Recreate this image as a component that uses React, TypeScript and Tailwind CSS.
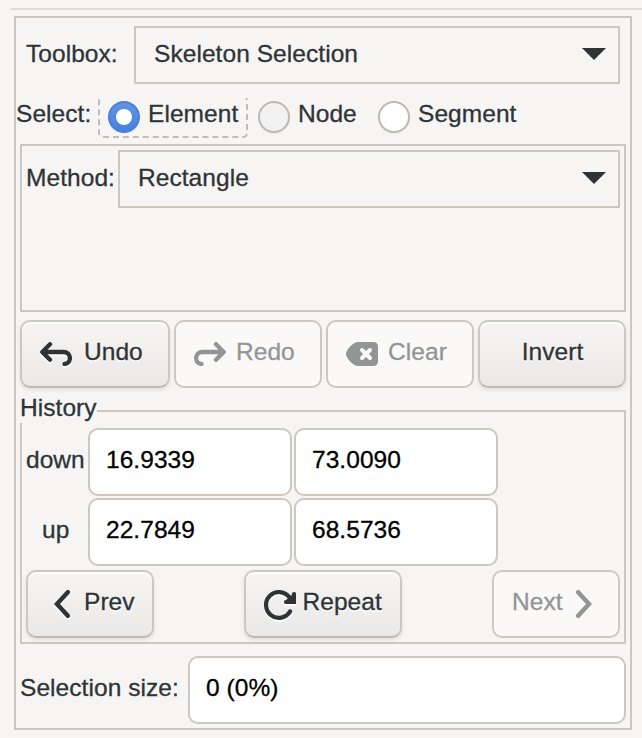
import type { ReactNode } from "react";

function Combo({ value, className }: { value: string; className: string }) {
  return (
    <div className={`flex h-[58px] items-center justify-between border-2 border-[#cdc7c2] pl-[18px] pr-3 ${className}`}>
      <span className="pb-[3px]">{value}</span>
      <svg width="24" height="12" viewBox="0 0 24 12" className="mb-[2px]">
        <path d="M0 0H24L12 12Z" fill="#2e3436" />
      </svg>
    </div>
  );
}

function Button({ disabled, className, children }: { disabled?: boolean; className: string; children: ReactNode }) {
  const look = disabled
    ? "border-[#cdc7c2] bg-[#faf9f8] text-[#929595]"
    : "border-[#cdc7c2] border-b-[#bfb8b1] bg-linear-to-b from-[#f6f5f4] to-[#e9e8e7] text-[#2e3436] shadow-[inset_0_2px_#ffffff,0_2px_4px_rgba(0,0,0,0.09)] [text-shadow:0_2px_rgba(255,255,255,0.77)] [&_svg]:drop-shadow-[0_2px_0_rgba(255,255,255,0.77)]";
  return (
    <button className={`flex h-[68px] shrink-0 items-center rounded-[10px] border-2 ${look} ${className}`}>
      {children}
    </button>
  );
}

function Entry({ value, className }: { value: string; className: string }) {
  return (
    <div className={`flex h-[68px] items-center rounded-[10px] border-2 border-[#cdc7c2] bg-white pb-[4px] pl-4 text-black ${className}`}>
      {value}
    </div>
  );
}

function Radio({ state }: { state: "on" | "off" | "dim" }) {
  if (state === "on")
    return (
      <span className="flex size-8 items-center justify-center rounded-full border-2 border-[#4a80d8] bg-linear-to-b from-[#6193e3] to-[#4681df]">
        <span className="size-4 rounded-full bg-white" />
      </span>
    );
  return (
    <span
      className={`size-8 rounded-full border-2 border-[#bfb8b1] shadow-[0_1px_1px_rgba(0,0,0,0.06)] ${state === "dim" ? "bg-[#f1f1f1]" : "bg-white"}`}
    />
  );
}

function TurnArrow({ flip }: { flip?: boolean }) {
  return (
    <svg width="32" height="24" viewBox="0 0 32 24" fill="none" stroke="currentColor" strokeWidth="4.300" strokeLinecap="round" strokeLinejoin="round" className={flip ? "-scale-x-100" : ""}>
      <path d="M10 2.200L2.300 10L10 17.800M3 10H23.500C27.500 10 29.900 12.500 29.900 16C29.900 19.500 27.500 21.900 24.500 21.900" />
    </svg>
  );
}

function Chevron({ flip }: { flip?: boolean }) {
  return (
    <svg width="16" height="28" viewBox="0 0 16 28" fill="none" stroke="currentColor" strokeWidth="4.400" strokeLinecap="round" strokeLinejoin="miter" className={flip ? "-scale-x-100" : ""}>
      <path d="M13.800 2.200L3 14L13.800 25.800" />
    </svg>
  );
}

export default function App() {
  return (
    <div className="h-[738px] w-[642px] bg-[#f6f5f4] pt-2 pl-[10px] font-['Liberation_Sans',Arial,sans-serif] text-[24.5px] leading-[24px] tracking-[0.06px] whitespace-nowrap text-[#2e3436] [-webkit-text-stroke:0.3px_currentColor]">
      <div className="h-[2px] bg-[#dedddb]" />
      <div className="mt-[6px] ml-1 h-[714px] w-[618px] border-2 border-[#cdc7c2] pt-2">
        <div className="flex items-center">
          <span className="w-[118px] pb-[3px] pl-[10px]">Toolbox:</span>
          <Combo value="Skeleton Selection" className="w-[486px]" />
        </div>

        <div className="mt-3 flex h-[42px] items-center">
          <span className="w-[82px] pb-[6px]">Select:</span>
          <div className="flex h-[42px] w-[150px] items-center rounded-[5px] border-2 border-dashed border-[#bdbdbb] border-t-transparent pl-2">
            <Radio state="on" />
            <span className="pb-[6px] pl-2">Element</span>
          </div>
          <div className="flex w-[120px] items-center pl-[10px]">
            <Radio state="dim" />
            <span className="pb-[6px] pl-2">Node</span>
          </div>
          <div className="flex items-center pl-[10px]">
            <Radio state="off" />
            <span className="pb-[6px] pl-2">Segment</span>
          </div>
        </div>

        <div className="mt-[6px] ml-1 h-[168px] w-[606px] border-2 border-[#cdc7c2] pt-1">
          <div className="flex items-center">
            <span className="w-[96px] pb-[3px] pl-1">Method:</span>
            <Combo value="Rectangle" className="w-[502px]" />
          </div>
        </div>

        <div className="mt-2 ml-1 flex gap-1">
          <Button className="w-[150px] pl-[18px]">
            <TurnArrow />
            <span className="pb-[4px] pl-3">Undo</span>
          </Button>
          <Button disabled className="w-[148px] pl-[18px]">
            <TurnArrow flip />
            <span className="pb-[4px] pl-[10px]">Redo</span>
          </Button>
          <Button disabled className="w-[148px] pl-[18px]">
            <svg width="32" height="24" viewBox="0 0 32 24">
              <path d="M12 0H27Q32 0 32 5V19Q32 24 27 24H12C7 24 0 16 0 12S7 0 12 0Z" fill="currentColor" />
              <path d="M16 8L24 16M24 8L16 16" stroke="#faf9f8" strokeWidth="4" strokeLinecap="round" />
            </svg>
            <span className="pb-[4px] pl-[10px]">Clear</span>
          </Button>
          <Button className="w-[148px] justify-center">
            <span className="pb-[4px] pl-[1px]">Invert</span>
          </Button>
        </div>

        <fieldset className="mt-[11px] ml-1 h-[245px] w-[606px] border-2 border-[#cdc7c2]">
          <legend className="relative -top-[3px] -ml-[2px] h-[24px]">History</legend>
          <div className="grid grid-cols-[66px_204px_204px] gap-y-[2px] pt-[5px]">
            <span className="self-center pb-[4px] pl-1">down</span>
            <Entry value="16.9339" className="w-[204px]" />
            <Entry value="73.0090" className="ml-[2px] w-[204px]" />
            <span className="self-center pb-[4px] pl-5">up</span>
            <Entry value="22.7849" className="w-[204px]" />
            <Entry value="68.5736" className="ml-[2px] w-[204px]" />
          </div>
          <div className="mt-1 flex justify-between px-1">
            <Button className="w-[128px] pl-[26px]">
              <Chevron />
              <span className="pb-[4px] pl-[14px]">Prev</span>
            </Button>
            <Button className="mr-[1px] w-[158px] pl-[18px]">
              <svg width="32" height="32" viewBox="0 0 32 32" fill="none" stroke="currentColor" strokeWidth="4.200" strokeLinecap="round" className="mt-[2px]">
                <path d="M26.100 22.400A12.900 12.900 0 1 1 25.500 8.500" />
                <path d="M30 5V13H22" />
                <path d="M21 12L30 4V13Z" fill="currentColor" stroke="none" />
              </svg>
              <span className="pb-[4px] pl-[7px]">Repeat</span>
            </Button>
            <Button disabled className="w-[128px] pl-[18px]">
              <span className="w-[64px] pb-[4px] text-left">Next</span>
              <Chevron flip />
            </Button>
          </div>
        </fieldset>

        <div className="mt-3 ml-1 flex items-center">
          <span className="w-[168px] pb-[4px]">Selection size:</span>
          <Entry value="0 (0%)" className="w-[438px]" />
        </div>
      </div>
    </div>
  );
}
